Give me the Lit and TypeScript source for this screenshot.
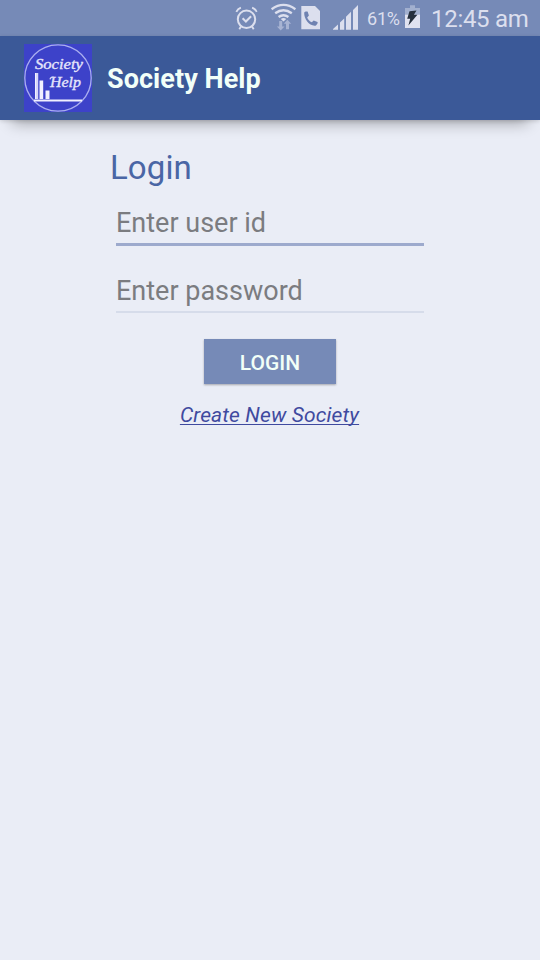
import { LitElement, html, css } from "lit";
import { customElement, property } from "lit/decorators.js";

@customElement("status-bar")
class StatusBar extends LitElement {
  static styles = css`
    :host { display: block; height: 36px; background: #768ab7; }
    .bar { display: flex; height: 36px; align-items: flex-start; justify-content: flex-end; padding-right: 12px; color: #dcdfee; white-space: nowrap; }
    svg { display: block; flex: none; height: 36px; }
    .percent { width: 33px; margin: 0 5px 0 9px; font-size: 18px; line-height: 38px; letter-spacing: -0.2px; }
    .time { width: 97px; margin-left: 11px; font-size: 24px; line-height: 38px; letter-spacing: -0.3px; }
  `;
  render() {
    return html`<div class="bar">
      <svg width="123" height="36" viewBox="235 0 123 36">
        <g fill="none" stroke="#dcdfee" stroke-width="2">
          <circle cx="246.500" cy="19.300" r="8.700" />
          <path d="M236.300 11.800q1.500-3 4.600-4.100M256.700 11.800q-1.500-3-4.600-4.100" stroke-width="1.800" />
          <path d="M242.600 18.200l3.300 3.300 5.200-5.200" />
          <path d="M241 26.500l-1.700 2.800M252 26.500l1.700 2.800" stroke-width="1.800" />
        </g>
        <g fill="none" stroke="#dcdfee" stroke-width="2.300">
          <path d="M271.600 9.200Q283.500 0.700 295.400 9.200" />
          <path d="M275.200 13.200Q283.500 7.200 291.800 13.200" />
          <path d="M278.600 17Q283.500 13.400 288.400 17" />
        </g>
        <path d="M280.800 19q2.700-2 5.400 0l-2.700 2.500z" fill="#dcdfee" />
        <path d="M279.200 21h3v5.500h2.300l-3.800 4-3.800-4h2.300zM286 29.200v-5.500h-2.200l3.600-4 3.800 4h-2.200v5.500z" fill="#a7b3d3" />
        <path d="M301.300 6H315l5 5v18.300h-18.700z" fill="#dcdfee" />
        <path d="M304.200 12.600c.2-1 2.900-1.600 3.500-.8l1.200 3.800-1.700 1.800c.8 2.100 2.300 3.700 4.600 4.800l1.900-1.700 3.800 1.500c.7.700-.9 3.400-2 3.700-5.900.8-11.600-6.200-11.300-13.100z" fill="#6f82b1" />
        <path d="M333 29.800v-.8l5-4.500v5.300zM340 29.800v-7.400l4.200-4v11.400zM346 29.800V16.800l5-5v18zM353 29.800V10l5-5v24.800z" fill="#dcdfee" />
      </svg>
      <span class="percent">61%</span>
      <svg width="15" viewBox="405 0 15 36">
        <path d="M405 8h5V5.300h5V8h5v7h-15z" fill="#a2b0cf" />
        <path d="M405 14.700h15V28h-15z" fill="#e0e2f0" />
        <path d="M409.500 11.200l7-.6-2.600 4.200h3.500l-9 10.800 1.800-6.800h-3z" fill="#26303d" />
      </svg>
      <span class="time">12:45 am</span>
    </div>`;
  }
}

@customElement("society-logo")
class SocietyLogo extends LitElement {
  static styles = css`
    :host { display: block; width: 68px; height: 68px; }
    svg { display: block; }
    text { font-family: "Liberation Serif", serif; font-style: italic; fill: #e6e6fb; stroke: #e6e6fb; stroke-width: 0.35px; }
  `;
  render() {
    return html`<svg width="68" height="68" viewBox="0 0 68 68">
      <rect width="68" height="68" fill="#3d42c9" />
      <circle cx="34" cy="34" r="33.200" fill="none" stroke="#aaaef0" stroke-width="1.300" />
      <text x="11" y="25" font-size="15" textLength="48" lengthAdjust="spacingAndGlyphs">Society</text>
      <text x="26" y="43" font-size="15" textLength="31" lengthAdjust="spacingAndGlyphs">Help</text>
      <path d="M30 33.300q-3.500-.6-4 2" fill="none" stroke="#d5d6f8" stroke-width="1.200" />
      <path d="M11 29h3.200v26H11zM15.500 36.500h3.700V55h-3.700zM21.500 46.500h4V55h-4zM10 55.500h48v2H10z" fill="#f1f0ff" />
      <path d="M13 29v26" stroke="#aaaef0" stroke-width="0.700" />
    </svg>`;
  }
}

@customElement("text-field")
class TextField extends LitElement {
  @property() label = "";
  @property({ type: Boolean, reflect: true }) active = false;
  static styles = css`
    :host { display: block; box-sizing: border-box; width: 308px; height: 44px; border-bottom: 2px solid #d6dcea; }
    :host([active]) { border-bottom: 3px solid #9daacd; }
    .hint { display: block; font-size: 27px; line-height: 44px; height: 41px; color: #7b7c80; white-space: nowrap; }
    :host([active]) .hint { line-height: 42px; }
  `;
  render() {
    return html`<span class="hint">${this.label}</span>`;
  }
}

@customElement("app-root")
class AppRoot extends LitElement {
  static styles = css`
    :host { display: flex; flex-direction: column; height: 960px; background: #eaedf6; font-family: Roboto, sans-serif; overflow: hidden; }
    .header { display: flex; flex: none; align-items: center; box-sizing: border-box; height: 84px; padding: 0 24px; gap: 15px; background: #3b5998; box-shadow: 0 1px 4px rgba(0, 0, 0, 0.15), 0 15px 14px -12px rgba(0, 0, 0, 0.32); }
    .title { color: #f2fff8; font-size: 27px; font-weight: 700; line-height: 36px; padding-top: 2px; letter-spacing: 0.06px; }
    .form { display: flex; flex-direction: column; align-items: center; width: 320px; margin: 0 auto; padding-top: 28px; }
    .heading { align-self: flex-start; color: #4a66a5; font-size: 33px; line-height: 40px; height: 54px; letter-spacing: 0.1px; }
    .second { margin-top: 23px; }
    .button { width: 132px; height: 45px; margin-top: 26px; border: 0; padding: 2px 0 0; background: #768ab7; color: #f2fff8; font: 500 21px Roboto, sans-serif; box-shadow: 0 1px 2px rgba(0, 0, 0, 0.3); }
    .link { margin: 18px 1px 0 0; color: #3f4a9f; font-size: 21px; line-height: 26px; letter-spacing: 0.14px; font-style: italic; text-decoration: underline; text-decoration-thickness: 1px; text-underline-offset: 2px; text-decoration-skip-ink: none; white-space: nowrap; }
  `;
  render() {
    return html`
      <status-bar></status-bar>
      <div class="header"><society-logo></society-logo><span class="title">Society Help</span></div>
      <div class="form">
        <div class="heading">Login</div>
        <text-field label="Enter user id" active></text-field>
        <text-field class="second" label="Enter password"></text-field>
        <button class="button">LOGIN</button>
        <a class="link">Create New Society</a>
      </div>
    `;
  }
}
